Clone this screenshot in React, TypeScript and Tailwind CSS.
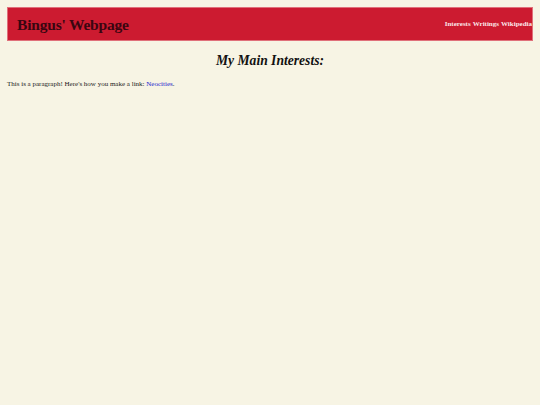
export default function App() {
	return (
		<div className="min-h-[405px] bg-[#f7f4e4] pt-[7px] px-[7px] font-['Liberation_Serif',serif] text-[#1a1a1a]">
			<header className="flex h-[34px] items-center justify-between overflow-hidden border border-[#e0707a] bg-[#cc1b30] pl-[9px]">
				<h1 className="pt-[1px] text-[15.5px] font-bold tracking-[-0.2px] text-[#3a0610]">
					Bingus' Webpage
				</h1>
				<nav className="flex gap-[2px] whitespace-nowrap text-[7px] font-bold text-[#fbe8ea]">
					<a href="#">Interests</a>
					<a href="#">Writings</a>
					<a href="#">Wikipedia</a>
				</nav>
			</header>
			<h2 className="mt-[10px] text-center text-[13.6px] font-bold italic text-[#111]">
				My Main Interests:
			</h2>
			<p className="mt-[8px] text-[7px]">
				This is a paragraph! Here's how you make a link:{" "}
				<a href="#" className="text-[#2222cc]">
					Neocities
				</a>
				.
			</p>
		</div>
	);
}
